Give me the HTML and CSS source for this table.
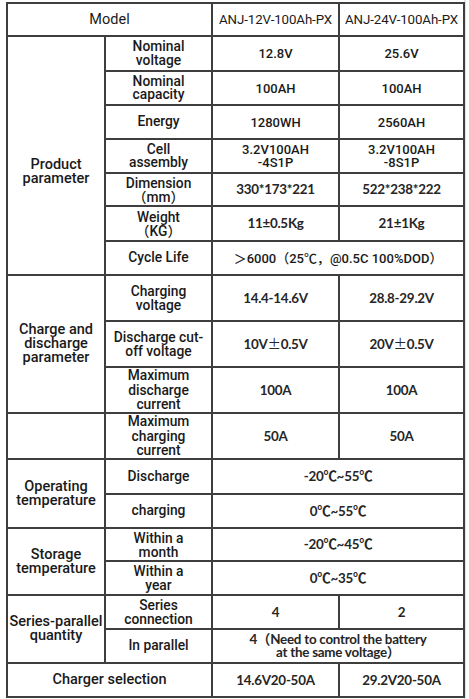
FILE: index.html
```html
<!DOCTYPE html>
<html>
<head>
<meta charset="utf-8">
<link rel="stylesheet" href="styles.css">
</head>
<body>
<div class="page">
<table class="spec">
  <colgroup>
    <col class="c1"><col class="c2"><col class="c3"><col class="c4">
  </colgroup>
  <tr class="h33">
    <td colspan="2" class="model">Model</td>
    <td class="head">ANJ-12V-100Ah-PX</td>
    <td class="head">ANJ-24V-100Ah-PX</td>
  </tr>
  <tr class="h35">
    <td rowspan="7" class="sec sec-prod">Product<br>parameter</td>
    <td class="lab">Nominal<br>voltage</td>
    <td class="v1">12.8V</td>
    <td class="v1">25.6V</td>
  </tr>
  <tr class="h34">
    <td class="lab">Nominal<br>capacity</td>
    <td class="v1">100AH</td>
    <td class="v1">100AH</td>
  </tr>
  <tr class="h34">
    <td class="lab">Energy</td>
    <td class="v1">1280WH</td>
    <td class="v1">2560AH</td>
  </tr>
  <tr class="h34">
    <td class="lab">Cell<br>assembly</td>
    <td class="v1 tight">3.2V100AH<br>-4S1P</td>
    <td class="v1 tight">3.2V100AH<br>-8S1P</td>
  </tr>
  <tr class="h33">
    <td class="lab wide">Dimension<br>（mm）</td>
    <td class="v2">330*173*221</td>
    <td class="v2">522*238*222</td>
  </tr>
  <tr class="h35">
    <td class="lab wide">Weight<br>（KG）</td>
    <td class="v2">11±0.5Kg</td>
    <td class="v2">21±1Kg</td>
  </tr>
  <tr class="h34">
    <td class="lab">Cycle Life</td>
    <td colspan="2" class="v1">＞6000（25℃，@0.5C 100%DOD）</td>
  </tr>
  <tr class="h46">
    <td rowspan="3" class="sec">Charge and<br>discharge<br>parameter</td>
    <td class="lab wide">Charging<br>voltage</td>
    <td class="v2">14.4-14.6V</td>
    <td class="v2">28.8-29.2V</td>
  </tr>
  <tr class="h46">
    <td class="lab wide">Discharge cut-<br>off voltage</td>
    <td class="v2">10V<span class="cjk">±</span>0.5V</td>
    <td class="v2">20V<span class="cjk">±</span>0.5V</td>
  </tr>
  <tr class="h46">
    <td class="lab three">Maximum<br>discharge<br>current</td>
    <td class="v2">100A</td>
    <td class="v2">100A</td>
  </tr>
  <tr class="h46">
    <td class="sec"></td>
    <td class="lab three">Maximum<br>charging<br>current</td>
    <td class="v2">50A</td>
    <td class="v2">50A</td>
  </tr>
  <tr class="h35">
    <td rowspan="2" class="sec">Operating<br>temperature</td>
    <td class="lab">Discharge</td>
    <td colspan="2" class="v2">-20℃~55℃</td>
  </tr>
  <tr class="h34">
    <td class="lab">charging</td>
    <td colspan="2" class="v2">0℃~55℃</td>
  </tr>
  <tr class="h33">
    <td rowspan="2" class="sec">Storage<br>temperature</td>
    <td class="lab wide">Within a<br>month</td>
    <td colspan="2" class="v2">-20℃~45℃</td>
  </tr>
  <tr class="h34">
    <td class="lab wide">Within a<br>year</td>
    <td colspan="2" class="v2">0℃~35℃</td>
  </tr>
  <tr class="h34">
    <td rowspan="2" class="sec">Series-parallel<br>quantity</td>
    <td class="lab wide">Series<br>connection</td>
    <td class="v2">4</td>
    <td class="v2">2</td>
  </tr>
  <tr class="h34">
    <td class="lab">In parallel</td>
    <td colspan="2" class="v2 tight">4（Need to control the battery<br>at the same voltage）</td>
  </tr>
  <tr class="h34">
    <td colspan="2" class="sec">Charger selection</td>
    <td class="v2">14.6V20-50A</td>
    <td class="v2">29.2V20-50A</td>
  </tr>
</table>
</div>
</body>
</html>
```

FILE: styles.css
```css
html, body {
  margin: 0;
  padding: 0;
  background: #ffffff;
}

.page {
  width: 466px;
  height: 699px;
  padding: 2px 0 0 6px;
  box-sizing: border-box;
  border-right: 2px solid #e4e4e4;
}

.spec {
  width: 457px;
  table-layout: fixed;
  border-collapse: collapse;
  color: #1a1a1a;
  font-family: Roboto, "Noto Sans CJK SC", sans-serif;
}

.c1 { width: 98px; }
.c2 { width: 107px; }
.c3 { width: 127px; }
.c4 { width: 125px; }

.spec td {
  border: 2px solid #3e3e3e;
  padding: 0 1px;
  text-align: center;
  vertical-align: middle;
  white-space: nowrap;
  overflow: visible;
}

.h33 { height: 33px; }
.h34 { height: 34px; }
.h35 { height: 35px; }
.h46 { height: 46px; }

.model {
  font-size: 14.5px;
  font-weight: 400;
}

.head {
  font-size: 13.3px;
  font-weight: 400;
  letter-spacing: -0.1px;
}

.sec {
  font-size: 14.5px;
  font-weight: 500;
  line-height: 14px;
}

.sec-prod {
  padding-top: 32px !important;
}

.lab {
  font-size: 13.8px;
  font-weight: 500;
  line-height: 13.5px;
}

.lab.wide {
  line-height: 14px;
}

.lab.three {
  line-height: 14.5px;
}

.v1 {
  font-size: 13px;
  font-weight: 500;
  line-height: 13px;
}

.v2 {
  font-family: Lato, "Noto Sans CJK SC", sans-serif;
  font-size: 13.4px;
  font-weight: 700;
  line-height: 13px;
  letter-spacing: -0.25px;
  color: #262626;
}

.cjk {
  font-family: "Noto Sans CJK SC", sans-serif;
  font-weight: 400;
}

.tight {
  line-height: 13px;
}
```
